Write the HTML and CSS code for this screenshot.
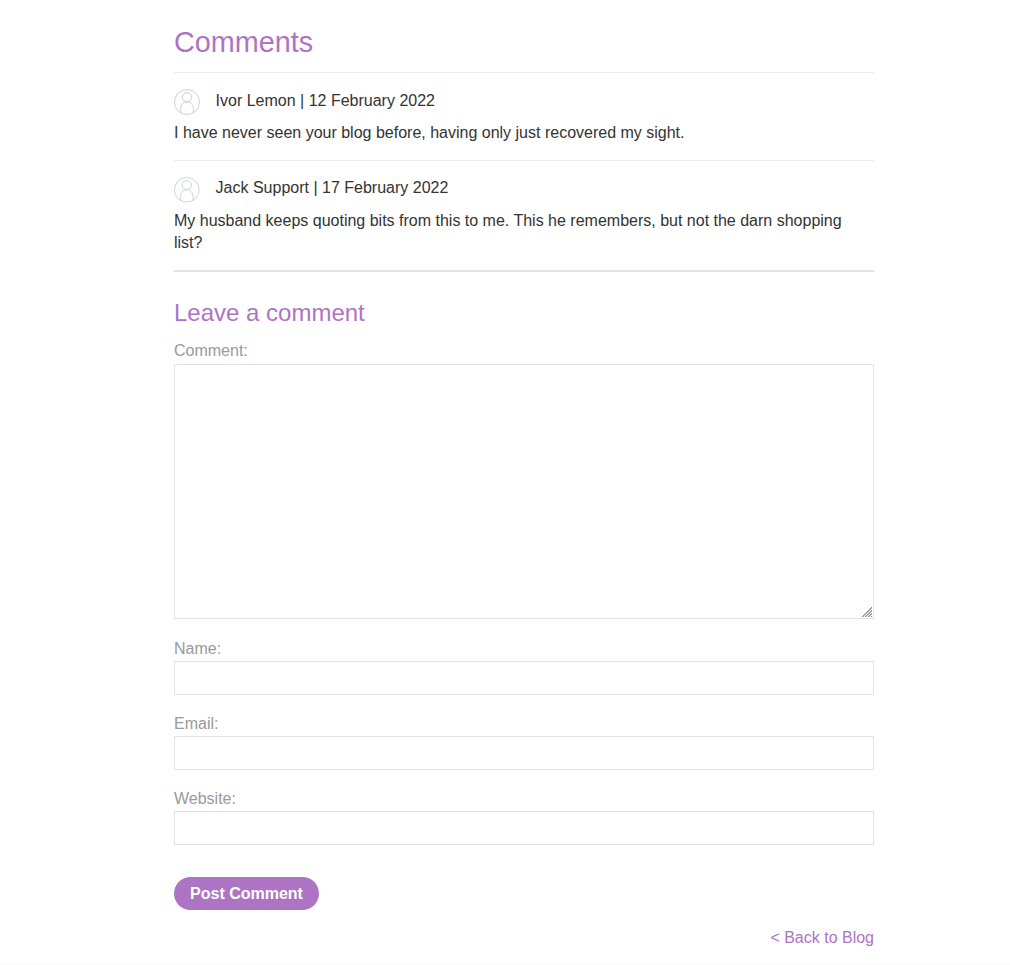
FILE: index.html
```html
<!DOCTYPE html>
<html lang="en">
<head>
<meta charset="utf-8">
<title>Comments</title>
<link rel="stylesheet" href="styles.css">
</head>
<body>
<main class="container">
  <h1 class="title">Comments</h1>
  <section class="comment">
    <p class="meta meta-first"><svg class="avatar" viewBox="0 0 26 26"><circle cx="13" cy="13" r="12.5"/><circle cx="13" cy="8.2" r="4.7"/><path d="M6.700 24.100V19.300a6.300 6.600 0 0 1 12.600 0V24.100"/></svg><span>Ivor Lemon | 12 February 2022</span></p>
    <p class="text">I have never seen your blog before, having only just recovered my sight.</p>
  </section>
  <section class="comment">
    <p class="meta meta-second"><svg class="avatar" viewBox="0 0 26 26"><circle cx="13" cy="13" r="12.5"/><circle cx="13" cy="8.2" r="4.7"/><path d="M6.700 24.100V19.300a6.300 6.600 0 0 1 12.600 0V24.100"/></svg><span>Jack Support | 17 February 2022</span></p>
    <p class="text">My husband keeps quoting bits from this to me. This he remembers, but not the darn shopping list?</p>
  </section>
  <form class="form">
    <h2 class="subtitle">Leave a comment</h2>
    <label for="comment">Comment:</label>
    <div class="editor">
      <textarea id="comment"></textarea>
      <svg class="grip" viewBox="0 0 11 11" shape-rendering="crispEdges"><path class="grip-dark" d="M0 10h1v1H0zM1 9h1v1H1zM2 8h1v1H2zM3 7h1v1H3zM4 6h1v1H4zM5 5h1v1H5zM6 4h1v1H6zM7 3h1v1H7zM8 2h1v1H8zM9 1h1v1H9zM3 10h1v1H3zM4 9h1v1H4zM5 8h1v1H5zM6 7h1v1H6zM7 6h1v1H7zM8 5h1v1H8zM9 4h1v1H9zM6 10h1v1H6zM7 9h1v1H7zM8 8h1v1H8zM9 7h1v1H9zM9 10h1v1H9z"/><path class="grip-light" d="M1 10h1v1H1zM2 9h1v1H2zM3 8h1v1H3zM4 7h1v1H4zM5 6h1v1H5zM6 5h1v1H6zM7 4h1v1H7zM8 3h1v1H8zM9 2h1v1H9zM4 10h1v1H4zM5 9h1v1H5zM6 8h1v1H6zM7 7h1v1H7zM8 6h1v1H8zM9 5h1v1H9zM7 10h1v1H7zM8 9h1v1H8zM9 8h1v1H9z"/></svg>
    </div>
    <label for="name">Name:</label>
    <input id="name" type="text">
    <label for="email">Email:</label>
    <input id="email" type="email">
    <label for="website">Website:</label>
    <input id="website" type="text">
    <button class="button" type="button">Post Comment</button>
  </form>
  <a class="back" href="#">&lt; Back to Blog</a>
</main>
<footer class="footer"></footer>
</body>
</html>
```
FILE: styles.css
```css
* { box-sizing: border-box; }
body { margin: 0; background: #fff; color: #333332; font: 16px/22px "Liberation Sans", Arial, sans-serif; overflow: hidden; }
.container { width: 700px; margin: 0 0 0 174px; display: flex; flex-direction: column; }
.title { margin: 24px 0 12px; font-size: 28.8px; line-height: 36px; font-weight: 400; color: #ad74c3; }
.comment { border-top: 1px solid #ececec; padding: 16px 0; }
.comment p { margin: 0; }
.meta { display: flex; gap: 15.6px; height: 33px; }
.meta-first span { padding-top: 1px; }
.avatar { width: 26px; height: 26px; fill: none; stroke: #ced1d1; stroke-width: 1; }
.meta-second { gap: 16px; }
.meta-second .avatar { width: 25.6px; height: 25.6px; }
.form { display: flex; flex-direction: column; border-top: 2px solid #e3e3e3; }
.subtitle { margin: 26px 0 11px; font-size: 24px; line-height: 30px; font-weight: 400; color: #ad74c3; }
label { color: #999; line-height: 24px; }
.editor { position: relative; display: flex; margin: 1px 0 18px; }
textarea { width: 100%; height: 255px; border: 1px solid #e3e3e3; outline: 0; resize: none; }
.grip { position: absolute; right: 1px; bottom: 2px; width: 11px; height: 11px; }
.grip-dark { fill: #888; }
.grip-light { fill: #bbb; }
input { height: 34px; margin: 0 0 17px; border: 1px solid #e3e3e3; outline: 0; }
.button { align-self: flex-start; margin: 15px 0 0; width: 145px; height: 33px; padding: 0; border: 0; border-radius: 17px; background: #ad74c3; color: #fff; font: bold 16px/33px "Liberation Sans", Arial, sans-serif; }
.back { align-self: flex-end; margin-top: 17px; color: #ad74c3; text-decoration: none; }
.footer { height: 2px; margin-top: 15px; background: #fafafa; }
```
